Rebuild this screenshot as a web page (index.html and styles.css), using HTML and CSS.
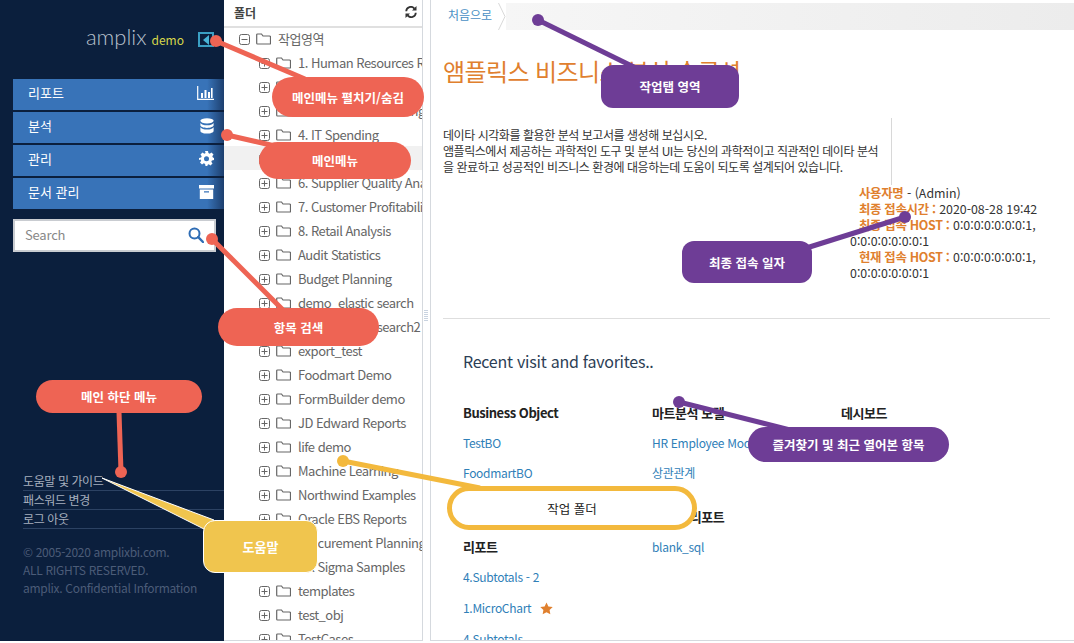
FILE: index.html
```html
<!DOCTYPE html>
<html lang="ko">
<head>
    <meta charset="UTF-8">
    <meta name="viewport" content="width=device-width, initial-scale=1.0">
    <title>amplix demo</title>
    <link rel="stylesheet" href="styles.css">
</head>
<body>
<svg class="icon-defs" width="0" height="0">
    <symbol id="i-plus" viewBox="0 0 11 11"><rect x="0.5" y="0.5" width="10" height="10" rx="2" fill="none" stroke="#666"/><path d="M2.5 5.5h6M5.5 2.5v6" stroke="#666" fill="none"/></symbol>
    <symbol id="i-minus" viewBox="0 0 11 11"><rect x="0.5" y="0.5" width="10" height="10" rx="2" fill="none" stroke="#666"/><path d="M2.5 5.5h6" stroke="#666" fill="none"/></symbol>
    <symbol id="i-folder" viewBox="0 0 15 12"><path d="M1.5 1h4l1.5 2h6.5a1 1 0 0 1 1 1v6.5a.5.5 0 0 1-.5.5H1.5a.8.8 0 0 1-.8-.8V1.8A.8.8 0 0 1 1.5 1z" fill="none" stroke="#666" stroke-width="1.2"/></symbol>
</svg>

<div class="app">
    <aside class="sidebar">
        <div class="brand">
            <span class="brand-name">amplix</span>
            <span class="brand-tag">demo</span>
            <span class="collapse-btn"><svg width="8" height="10" viewBox="0 0 8 10"><path d="M7 0v10L1 5z" fill="#49b3d6"/></svg></span>
        </div>
        <nav class="main-menu">
            <a class="menu-item">리포트
                <svg class="menu-icon" width="17" height="14" viewBox="0 0 17 14"><path d="M.7 0v13.3H17" fill="none" stroke="#fff" stroke-width="1.2"/><path d="M4 7h2v5H4zM7.5 4h2v8h-2zM11 6h2v6h-2zM14 2h1.6v10H14z" fill="#fff"/></svg>
            </a>
            <a class="menu-item">분석
                <svg class="menu-icon" width="14" height="16" viewBox="0 0 14 16"><ellipse cx="7" cy="2.8" rx="6.6" ry="2.6" fill="#fff"/><path d="M.4 5c1 1.600 3.500 2.300 6.600 2.300S12.600 6.600 13.600 5v2.300c0 1.500-3 2.600-6.600 2.600S.4 8.800.4 7.300zM.4 9.300c1 1.600 3.500 2.300 6.600 2.300s5.600-.7 6.600-2.300v3.600c0 1.500-3 2.600-6.600 2.600S.4 14.400.4 12.900z" fill="#fff"/></svg>
            </a>
            <a class="menu-item">관리
                <svg class="menu-icon" width="15" height="15" viewBox="0 0 15 15"><path fill-rule="evenodd" d="M6 0h3l.4 2.100 1.300.6L12.500 1.500l2 2-1.200 1.800.6 1.300L15 7v2l-2.100.4-.6 1.300 1.200 1.800-2 2-1.800-1.200-1.300.6L8.500 15h-2l-.4-2.100-1.300-.6-1.800 1.200-2-2 1.200-1.800-.6-1.300L0 9V7l2.100-.4.6-1.300L1.500 3.500l2-2 1.800 1.200 1.300-.6zM7.500 5.200a2.500 2.500 0 1 0 0 5 2.500 2.500 0 0 0 0-5z" fill="#fff"/></svg>
            </a>
            <a class="menu-item">문서 관리
                <svg class="menu-icon" width="15" height="14" viewBox="0 0 15 14"><path fill-rule="evenodd" d="M0 0h15v3.500H0zM.8 4.500h13.400V14H.8zM5 6.300v1.200h5V6.300z" fill="#fff"/></svg>
            </a>
        </nav>
        <div class="search-box">
            <span class="search-text">Search</span>
            <svg width="16" height="16" viewBox="0 0 16 16"><circle cx="6.500" cy="6.500" r="5" fill="none" stroke="#2f6db5" stroke-width="2"/><path d="M10.200 10.200L15 15" stroke="#2f6db5" stroke-width="2.400" stroke-linecap="round"/></svg>
        </div>
        <ul class="bottom-menu">
            <li>도움말 및 가이드</li>
            <li>패스워드 변경</li>
            <li>로그 아웃</li>
        </ul>
        <p class="copyright">© 2005-2020 amplixbi.com.<br>ALL RIGHTS RESERVED.<br>amplix. Confidential Information</p>
    </aside>

    <section class="folder-panel">
        <header class="folder-head">
            <span>폴더</span>
            <svg width="12" height="12" viewBox="0 0 12 12"><path d="M1.200 5.200A4.600 4.600 0 0 1 9.400 2.600M10.800 6.800A4.600 4.600 0 0 1 2.600 9.400" fill="none" stroke="#333" stroke-width="1.800"/><path d="M11.500 0v4.500H7zM.5 12V7.500H5z" fill="#333"/></svg>
        </header>
        <ul class="tree">
            <li class="tree-row root"><svg class="tog"><use href="#i-minus"/></svg><svg class="fld"><use href="#i-folder"/></svg><span>작업영역</span></li>
            <li class="tree-row"><svg class="tog"><use href="#i-plus"/></svg><svg class="fld"><use href="#i-folder"/></svg><span>1. Human Resources Reports</span></li>
            <li class="tree-row"><svg class="tog"><use href="#i-plus"/></svg><svg class="fld"><use href="#i-folder"/></svg><span>2. Financial Analysis</span></li>
            <li class="tree-row"><svg class="tog"><use href="#i-plus"/></svg><svg class="fld"><use href="#i-folder"/></svg><span>3. Sales and Marketing</span></li>
            <li class="tree-row"><svg class="tog"><use href="#i-plus"/></svg><svg class="fld"><use href="#i-folder"/></svg><span>4. IT Spending</span></li>
            <li class="tree-row selected"><svg class="tog"><use href="#i-plus"/></svg><svg class="fld"><use href="#i-folder"/></svg><span>5. Store Sales</span></li>
            <li class="tree-row"><svg class="tog"><use href="#i-plus"/></svg><svg class="fld"><use href="#i-folder"/></svg><span>6. Supplier Quality Analysis</span></li>
            <li class="tree-row"><svg class="tog"><use href="#i-plus"/></svg><svg class="fld"><use href="#i-folder"/></svg><span>7. Customer Profitability</span></li>
            <li class="tree-row"><svg class="tog"><use href="#i-plus"/></svg><svg class="fld"><use href="#i-folder"/></svg><span>8. Retail Analysis</span></li>
            <li class="tree-row"><svg class="tog"><use href="#i-plus"/></svg><svg class="fld"><use href="#i-folder"/></svg><span>Audit Statistics</span></li>
            <li class="tree-row"><svg class="tog"><use href="#i-plus"/></svg><svg class="fld"><use href="#i-folder"/></svg><span>Budget Planning</span></li>
            <li class="tree-row"><svg class="tog"><use href="#i-plus"/></svg><svg class="fld"><use href="#i-folder"/></svg><span>demo_elastic search</span></li>
            <li class="tree-row"><svg class="tog"><use href="#i-plus"/></svg><svg class="fld"><use href="#i-folder"/></svg><span>demo_elastic search2</span></li>
            <li class="tree-row"><svg class="tog"><use href="#i-plus"/></svg><svg class="fld"><use href="#i-folder"/></svg><span>export_test</span></li>
            <li class="tree-row"><svg class="tog"><use href="#i-plus"/></svg><svg class="fld"><use href="#i-folder"/></svg><span>Foodmart Demo</span></li>
            <li class="tree-row"><svg class="tog"><use href="#i-plus"/></svg><svg class="fld"><use href="#i-folder"/></svg><span>FormBuilder demo</span></li>
            <li class="tree-row"><svg class="tog"><use href="#i-plus"/></svg><svg class="fld"><use href="#i-folder"/></svg><span>JD Edward Reports</span></li>
            <li class="tree-row"><svg class="tog"><use href="#i-plus"/></svg><svg class="fld"><use href="#i-folder"/></svg><span>life demo</span></li>
            <li class="tree-row"><svg class="tog"><use href="#i-plus"/></svg><svg class="fld"><use href="#i-folder"/></svg><span>Machine Learning</span></li>
            <li class="tree-row"><svg class="tog"><use href="#i-plus"/></svg><svg class="fld"><use href="#i-folder"/></svg><span>Northwind Examples</span></li>
            <li class="tree-row"><svg class="tog"><use href="#i-plus"/></svg><svg class="fld"><use href="#i-folder"/></svg><span>Oracle EBS Reports</span></li>
            <li class="tree-row"><svg class="tog"><use href="#i-plus"/></svg><svg class="fld"><use href="#i-folder"/></svg><span>Procurement Planning</span></li>
            <li class="tree-row"><svg class="tog"><use href="#i-plus"/></svg><svg class="fld"><use href="#i-folder"/></svg><span>Six Sigma Samples</span></li>
            <li class="tree-row"><svg class="tog"><use href="#i-plus"/></svg><svg class="fld"><use href="#i-folder"/></svg><span>templates</span></li>
            <li class="tree-row"><svg class="tog"><use href="#i-plus"/></svg><svg class="fld"><use href="#i-folder"/></svg><span>test_obj</span></li>
            <li class="tree-row"><svg class="tog"><use href="#i-plus"/></svg><svg class="fld"><use href="#i-folder"/></svg><span>TestCases</span></li>
        </ul>
    </section>

    <div class="splitter"><span class="grip"></span></div>

    <main class="content">
        <div class="tab-bar">
            <a class="tab-home">처음으로</a>
            <svg class="tab-chevron" width="8" height="27" viewBox="0 0 8 27"><path d="M.5 0L7 13.500.5 27" fill="none" stroke="#d8d8d8"/></svg>
            <div class="tab-strip"></div>
        </div>
        <div class="page">
            <h1 class="title">앰플릭스 비즈니스 분석 솔루션</h1>
            <p class="intro">데이타 시각화를 활용한 분석 보고서를 생성해 보십시오.<br>앰플릭스에서 제공하는 과학적인 도구 및 분석 UI는 당신의 과학적이고 직관적인 데이타 분석을 완료하고 성공적인 비즈니스 환경에 대응하는데 도움이 되도록 설계되어 있습니다.</p>
            <div class="user-info">
                <p><b>사용자명</b> - (Admin)</p>
                <p><b>최종 접속시간 :</b> 2020-08-28 19:42</p>
                <p><b>최종 접속 HOST :</b> 0:0:0:0:0:0:0:1, 0:0:0:0:0:0:0:1</p>
                <p><b>현재 접속 HOST :</b> 0:0:0:0:0:0:0:1, 0:0:0:0:0:0:0:1</p>
            </div>
            <hr class="divider">
            <h2 class="recent-title">Recent visit and favorites..</h2>
            <div class="recent-grid">
                <div class="recent-col">
                    <div class="group first">
                        <h3>Business Object</h3>
                        <a>TestBO</a>
                        <a>FoodmartBO</a>
                    </div>
                    <div class="group">
                        <h3>리포트</h3>
                        <a>4.Subtotals - 2</a>
                        <a class="fav">1.MicroChart <svg width="13" height="13" viewBox="0 0 24 24"><path d="M12 .8l3.500 7.300 8 1.100-5.800 5.600 1.400 8L12 19l-7.100 3.800 1.400-8L.5 9.200l8-1.100z" fill="#e0802e"/></svg></a>
                        <a>4.Subtotals</a>
                    </div>
                </div>
                <div class="recent-col">
                    <div class="group">
                        <h3>마트분석 모델</h3>
                        <a>HR Employee Model</a>
                        <a>상관관계</a>
                    </div>
                    <div class="group">
                        <h3>비정형 리포트</h3>
                        <a>blank_sql</a>
                    </div>
                </div>
                <div class="recent-col">
                    <div class="group">
                        <h3>데시보드</h3>
                    </div>
                </div>
            </div>
        </div>
    </main>
</div>

<!-- annotation layer -->
<svg class="notes-lines" width="1074" height="643" viewBox="0 0 1074 643">
    <g stroke="#ee6454" stroke-width="5" fill="#ee6454">
        <path d="M216 41L305 79"/><circle cx="216" cy="41" r="6" stroke="none"/>
        <path d="M227 135L275 146"/><circle cx="227" cy="135" r="6" stroke="none"/>
        <path d="M212 239L285 312"/><circle cx="212" cy="239" r="6" stroke="none"/>
        <path d="M119 412L121 472"/><circle cx="121" cy="472" r="6" stroke="none"/>
    </g>
    <path d="M102 478L214 520L204 529z" fill="#f0c54e" stroke="#fff" stroke-width="1"/>
    <g stroke="#6e3d96" stroke-width="5" fill="#6e3d96">
        <path d="M538 20L640 70"/><circle cx="538" cy="20" r="6" stroke="none"/>
        <path d="M905 217L800 250"/><circle cx="905" cy="217" r="6" stroke="none"/>
        <path d="M679 402L790 430"/><circle cx="679" cy="402" r="6" stroke="none"/>
    </g>
    <g stroke="#f3b93d" stroke-width="5" fill="#f3b93d">
        <path d="M343 461L480 488"/><circle cx="343" cy="461" r="6" stroke="none"/>
    </g>
</svg>
<div class="note coral note-toggle">메인메뉴 펼치기/숨김</div>
<div class="note coral note-menu">메인메뉴</div>
<div class="note coral note-search">항목 검색</div>
<div class="note coral note-bottom">메인 하단 메뉴</div>
<div class="note yellow note-help">도움말</div>
<div class="note purple note-tabs">작업탭 영역</div>
<div class="note purple note-login">최종 접속 일자</div>
<div class="note purple note-recent">즐겨찾기 및 최근 열어본 항목</div>
<div class="note outline note-folder">작업 폴더</div>
</body>
</html>
```

FILE: styles.css
```css
* {
    box-sizing: border-box;
}
html, body {
    margin: 0;
    height: 643px;
    overflow: hidden;
    background: #fff;
    font-family: "Noto Sans CJK KR", "Noto Sans", sans-serif;
    font-size: 12px;
    color: #333;
}
ul {
    list-style: none;
    margin: 0;
    padding: 0;
}
.icon-defs {
    display: block;
    height: 0;
}
.app {
    display: flex;
    height: 641px;
}

/* left menu */
.sidebar {
    width: 224px;
    flex: none;
    background: #0b1f3d;
    display: flex;
    flex-direction: column;
}
.brand {
    height: 79px;
    padding: 24px 10px 0 0;
    display: flex;
    justify-content: flex-end;
    align-items: flex-start;
}
.brand-name {
    font-family: "Lato", sans-serif;
    font-weight: 300;
    font-size: 22px;
    line-height: 26px;
    color: #b7c0cc;
}
.brand-tag {
    font-size: 12px;
    line-height: 20px;
    margin: 6px 14px 0 5px;
    color: #d8d84a;
}
.collapse-btn {
    width: 16px;
    height: 15px;
    margin-top: 8px;
    border: 2px solid #3a9fc4;
    display: flex;
    align-items: center;
    justify-content: center;
}
.main-menu {
    margin-left: 13px;
    display: flex;
    flex-direction: column;
    gap: 2px;
}
.menu-item {
    height: 31px;
    padding: 0 10px 4px 15px;
    display: flex;
    align-items: center;
    justify-content: space-between;
    color: #fff;
    font-size: 13px;
    background: linear-gradient(to right, #3873b8 0, #3873b8 92%, #1d3f6e 100%);
}
.menu-icon {
    flex: none;
}
.search-box {
    width: 203px;
    height: 33px;
    margin: 10px 0 0 13px;
    padding: 0 10px 2px 10px;
    border: 2px solid #c9ccd1;
    background: #fff;
    display: flex;
    align-items: center;
    justify-content: space-between;
}
.search-text {
    font-size: 13px;
    color: #888;
    letter-spacing: -0.2px;
}
.bottom-menu {
    margin: 220px 0 0 23px;
    color: #a7afbd;
    font-size: 12px;
    letter-spacing: -0.4px;
}
.bottom-menu li {
    height: 19px;
    line-height: 18px;
    border-bottom: 1px solid #2c4263;
}
.copyright {
    margin: 14px 0 0 23px;
    font-size: 12px;
    line-height: 18px;
    letter-spacing: -0.3px;
    color: #4b5c78;
}

/* folder tree */
.folder-panel {
    width: 199px;
    flex: none;
    border-right: 1px solid #d5d9de;
    border-bottom: 1px solid #d5d9de;
    overflow: hidden;
}
.folder-head {
    height: 28px;
    padding: 0 5px 2px 10px;
    border-bottom: 2px solid #e0e0e0;
    display: flex;
    align-items: center;
    justify-content: space-between;
    font-weight: 700;
    font-size: 12px;
    color: #444;
}
.tree {
    margin-top: -2px;
}
.tree-row {
    height: 24px;
    padding-left: 35px;
    display: flex;
    align-items: center;
    white-space: nowrap;
    color: #666;
    font-size: 13px;
    letter-spacing: -0.5px;
}
.tree-row.root {
    padding-left: 15px;
}
.tree-row.selected {
    background: #f1f1f1;
}
.tog {
    width: 11px;
    height: 11px;
    flex: none;
    margin-top: 3px;
}
.fld {
    width: 15px;
    height: 12px;
    flex: none;
    margin: 1px 7px 0 6px;
}

.splitter {
    width: 7px;
    flex: none;
    display: flex;
    align-items: center;
}
.grip {
    width: 4px;
    height: 12px;
    margin: 0 0 0 1px;
    position: relative;
    top: -5px;
    background: repeating-linear-gradient(to bottom, #c9d3e0 0, #c9d3e0 1px, transparent 1px, transparent 2px);
}

/* main page */
.content {
    flex: 1;
    min-width: 0;
    border-left: 1px solid #d5d9de;
    border-bottom: 1px solid #d5d9de;
    overflow: hidden;
}
.tab-bar {
    height: 27px;
    margin-top: 3px;
    display: flex;
}
.tab-home {
    width: 67px;
    padding-left: 17px;
    line-height: 24px;
    color: #4a90c4;
}
.tab-chevron {
    flex: none;
}
.tab-strip {
    flex: 1;
    background: linear-gradient(to right, #f6f6f6, #ececec);
}
.page {
    padding: 0 24px 0 12px;
}
.title {
    margin: 24px 0 0;
    font-size: 24px;
    font-weight: 400;
    line-height: 34px;
    letter-spacing: -0.6px;
    color: #e0802e;
}
.intro {
    width: 449px;
    height: 67px;
    margin: 30px 0 0;
    padding: 9px 10px 0 0;
    border-right: 1px solid #d8d8d8;
    line-height: 16px;
    letter-spacing: -0.45px;
    word-break: break-all;
    color: #333;
}
.user-info {
    width: 200px;
    margin: 0 0 0 407px;
    line-height: 16px;
    font-size: 12.4px;
}
.user-info p {
    margin: 0;
    text-indent: 9px;
}
.user-info b {
    color: #e0802e;
    font-weight: 700;
    letter-spacing: -0.3px;
}
.divider {
    width: 607px;
    margin: 37px 0 0;
    border: 0;
    border-top: 1px solid #dedede;
}
.recent-title {
    margin: 28px 0 0 20px;
    font-size: 16px;
    font-weight: 400;
    line-height: 28px;
    letter-spacing: -0.25px;
    color: #2c3e55;
}
.recent-grid {
    display: flex;
    margin: 23px 0 0 20px;
}
.recent-col {
    width: 189px;
}
.group {
    margin-bottom: 14px;
}
.group.first {
    margin-bottom: 44px;
}
.group h3 {
    margin: 0;
    height: 30px;
    line-height: 30px;
    font-size: 13px;
    font-weight: 700;
    letter-spacing: -0.45px;
    color: #222;
}
.group a {
    display: block;
    height: 30px;
    line-height: 30px;
    white-space: nowrap;
    letter-spacing: -0.3px;
    color: #2f80b8;
}
.group a.fav {
    height: 32px;
    line-height: 32px;
}
.fav svg {
    margin-left: 6px;
    vertical-align: -2px;
}

/* callouts drawn over the screen */
.notes-lines {
    position: absolute;
    left: 0;
    top: 0;
}
.note {
    position: absolute;
    display: flex;
    align-items: center;
    justify-content: center;
    color: #fff;
    font-size: 12.5px;
    font-weight: 700;
}
.coral {
    background: #ee6454;
}
.purple {
    background: #6e3d96;
}
.yellow {
    background: #f0c54e;
    border: 1px solid #fff;
}
.outline {
    background: #fff;
    border: 5px solid #f3b93d;
    color: #222;
    font-weight: 400;
}
.note-toggle {
    left: 272px;
    top: 77px;
    width: 152px;
    height: 40px;
    border-radius: 20px;
}
.note-menu {
    left: 259px;
    top: 142px;
    width: 152px;
    height: 37px;
    border-radius: 19px;
}
.note-search {
    left: 218px;
    top: 308px;
    width: 161px;
    height: 38px;
    border-radius: 19px;
}
.note-bottom {
    left: 36px;
    top: 380px;
    width: 166px;
    height: 33px;
    border-radius: 17px;
}
.note-help {
    left: 203px;
    top: 520px;
    width: 115px;
    height: 53px;
    border-radius: 12px;
    font-size: 13px;
}
.note-tabs {
    left: 601px;
    top: 65px;
    width: 138px;
    height: 43px;
    border-radius: 12px;
}
.note-login {
    left: 682px;
    top: 241px;
    width: 130px;
    height: 42px;
    border-radius: 12px;
}
.note-recent {
    left: 748px;
    top: 427px;
    width: 201px;
    height: 35px;
    border-radius: 18px;
}
.note-folder {
    left: 447px;
    top: 486px;
    width: 250px;
    height: 44px;
    border-radius: 22px;
}
```
